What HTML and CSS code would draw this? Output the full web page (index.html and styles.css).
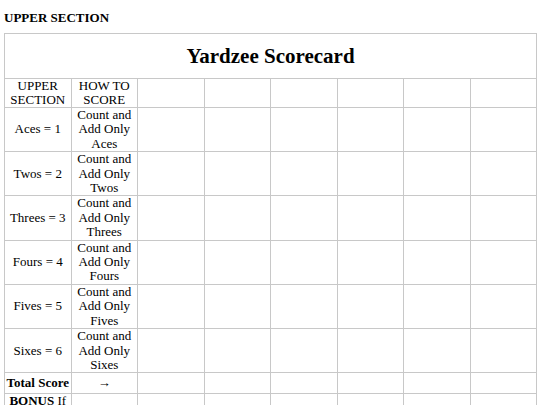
FILE: index.html
```html
<!DOCTYPE html>
<html>
<head>
<meta charset="utf-8">
<link rel="stylesheet" href="styles.css">
</head>
<body>
<div class="section-title">UPPER SECTION</div>
<table class="score">
  <tr class="title-row"><td colspan="8">Yardzee Scorecard</td></tr>
  <tr class="head-row"><td>UPPER SECTION</td><td>HOW TO SCORE</td><td></td><td></td><td></td><td></td><td></td><td></td></tr>
  <tr><td>Aces = 1</td><td>Count and Add Only Aces</td><td></td><td></td><td></td><td></td><td></td><td></td></tr>
  <tr><td>Twos = 2</td><td>Count and Add Only Twos</td><td></td><td></td><td></td><td></td><td></td><td></td></tr>
  <tr><td>Threes = 3</td><td>Count and Add Only Threes</td><td></td><td></td><td></td><td></td><td></td><td></td></tr>
  <tr><td>Fours = 4</td><td>Count and Add Only Fours</td><td></td><td></td><td></td><td></td><td></td><td></td></tr>
  <tr><td>Fives = 5</td><td>Count and Add Only Fives</td><td></td><td></td><td></td><td></td><td></td><td></td></tr>
  <tr><td>Sixes = 6</td><td>Count and Add Only Sixes</td><td></td><td></td><td></td><td></td><td></td><td></td></tr>
  <tr class="total-row"><td><b>Total Score</b></td><td>→</td><td></td><td></td><td></td><td></td><td></td><td></td></tr>
  <tr><td><b>BONUS</b> If total score is 63 or over</td><td>Score 35</td><td></td><td></td><td></td><td></td><td></td><td></td></tr>
</table>
</body>
</html>
```
FILE: styles.css
```css
body {
  margin: 0;
  padding: 4px 3px 0 4px;
  font-family: "Liberation Serif", serif;
  font-size: 13px;
  color: #000;
  background: #fff;
}
.section-title {
  font-weight: bold;
  font-size: 13px;
  line-height: 15px;
  padding-top: 6px;
  margin-bottom: 8px;
}
.score {
  width: 100%;
  border-collapse: collapse;
  table-layout: fixed;
  border: 1px solid #c8c8c8;
}
.score td {
  border: 1px solid #c8c8c8;
  padding: 0;
  text-align: center;
  vertical-align: middle;
  line-height: 14.4px;
}
.title-row td {
  height: 44px;
  font-size: 21px;
  font-weight: bold;
  line-height: 24px;
}
.head-row td {
  height: 28px;
  line-height: 14px;
}
.total-row td {
  height: 20px;
}
```
